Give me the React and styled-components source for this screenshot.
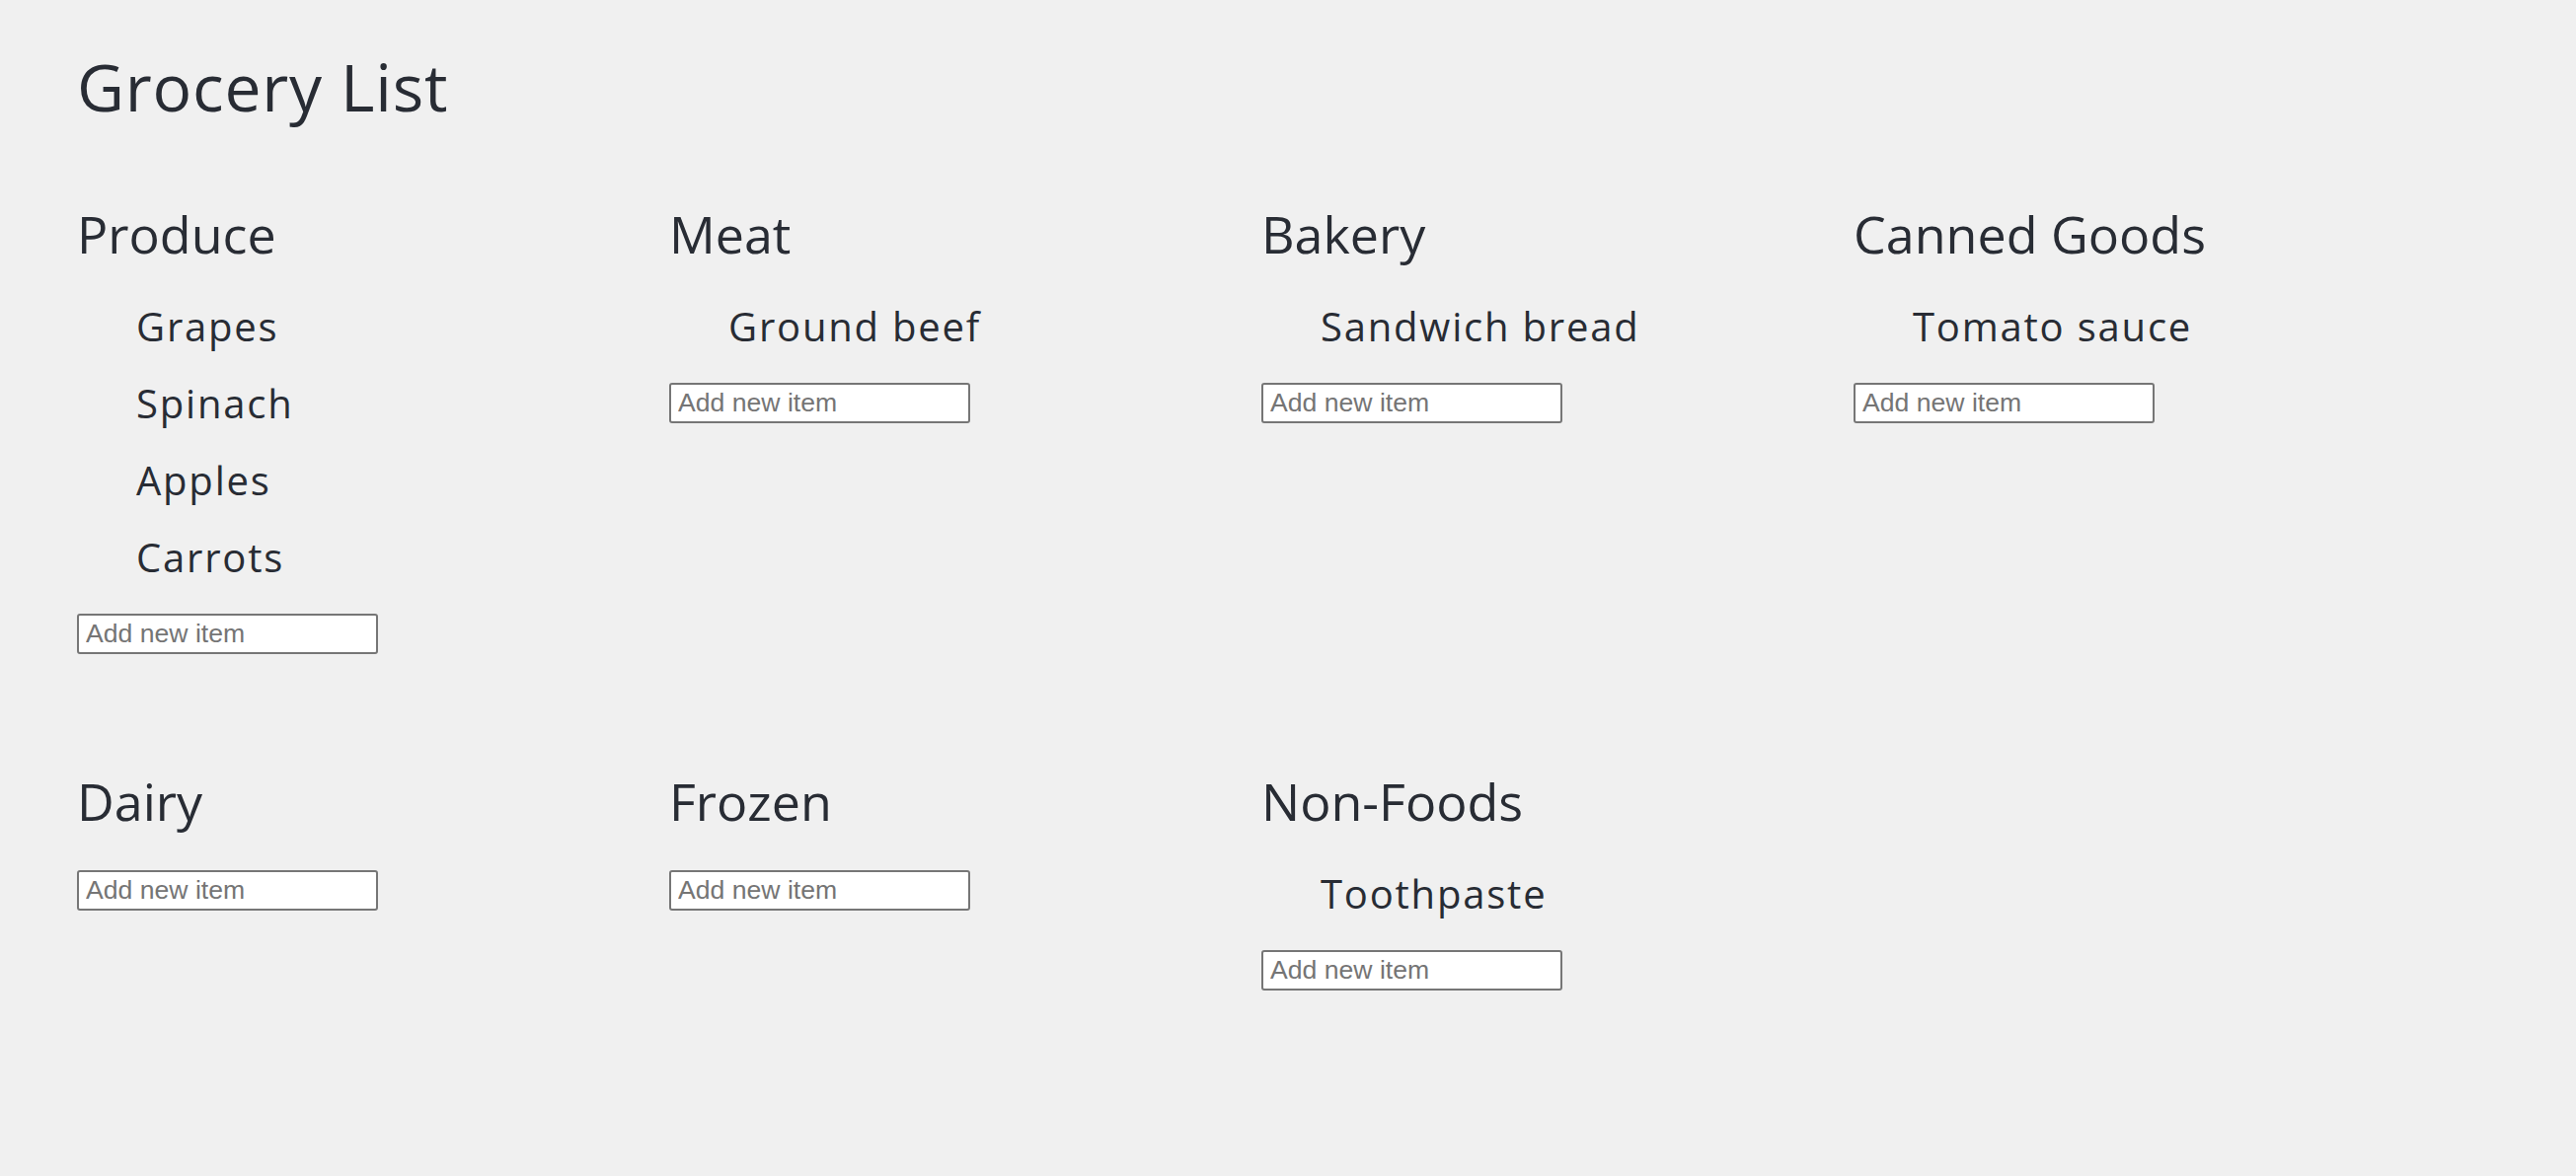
import React, { useState } from "react";
import { styled, createGlobalStyle } from "styled-components";

const GlobalStyle = createGlobalStyle`
  html, body {
    margin: 0;
    padding: 0;
    background-color: #f0f0f0;
  }
  body {
    font-family: "Open Sans", "DejaVu Sans", sans-serif;
    color: #282c34;
  }
`;

const Page = styled.div`
  padding: 47px 78px 80px;
  min-height: 1192px;
  box-sizing: border-box;
`;

const Title = styled.h1`
  margin: 0 0 72px;
  font-size: 66px;
  line-height: 80px;
  font-weight: 500;
  letter-spacing: 0.8px;
`;

const Sections = styled.div`
  display: grid;
  grid-template-columns: repeat(4, 600px);
  row-gap: 111px;
  align-items: start;
`;

const Section = styled.section`
  display: flex;
  flex-direction: column;
  align-items: flex-start;
  gap: 18px;
`;

const SectionTitle = styled.h2`
  margin: 0;
  font-size: 52px;
  line-height: 75px;
  font-weight: 500;
`;

const ItemList = styled.ul`
  list-style: none;
  margin: 0;
  padding: 0 0 0 60px;

  &:empty {
    margin-top: -3px;
  }
`;

const Item = styled.li`
  font-size: 40px;
  line-height: 78px;
  font-weight: 400;
  letter-spacing: 1.8px;
`;

const AddInput = styled.input`
  box-sizing: border-box;
  width: 305px;
  height: 41px;
  padding: 0 7px;
  border: 2px solid #767676;
  border-radius: 3px;
  background-color: #fff;
  font-family: "Liberation Sans", Arial, sans-serif;
  font-size: 26.6px;
  color: #000;

  &::placeholder {
    color: #757575;
  }
`;

const initialSections = [
  { name: "Produce", items: ["Grapes", "Spinach", "Apples", "Carrots"] },
  { name: "Meat", items: ["Ground beef"] },
  { name: "Bakery", items: ["Sandwich bread"] },
  { name: "Canned Goods", items: ["Tomato sauce"] },
  { name: "Dairy", items: [] },
  { name: "Frozen", items: [] },
  { name: "Non-Foods", items: ["Toothpaste"] },
];

function GrocerySection({ section, onAdd }) {
  const [value, setValue] = useState("");

  const handleKeyDown = (e) => {
    if (e.key === "Enter" && value.trim()) {
      onAdd(section.name, value.trim());
      setValue("");
    }
  };

  return (
    <Section>
      <SectionTitle>{section.name}</SectionTitle>
      <ItemList>
        {section.items.map((item) => (
          <Item key={item}>{item}</Item>
        ))}
      </ItemList>
      <AddInput
        type="text"
        placeholder="Add new item"
        value={value}
        onChange={(e) => setValue(e.target.value)}
        onKeyDown={handleKeyDown}
      />
    </Section>
  );
}

export default function App() {
  const [sections, setSections] = useState(initialSections);

  const addItem = (name, item) => {
    setSections((prev) =>
      prev.map((s) => (s.name === name ? { ...s, items: [...s.items, item] } : s))
    );
  };

  return (
    <>
      <GlobalStyle />
      <Page>
        <Title>Grocery List</Title>
        <Sections>
          {sections.map((section) => (
            <GrocerySection key={section.name} section={section} onAdd={addItem} />
          ))}
        </Sections>
      </Page>
    </>
  );
}
